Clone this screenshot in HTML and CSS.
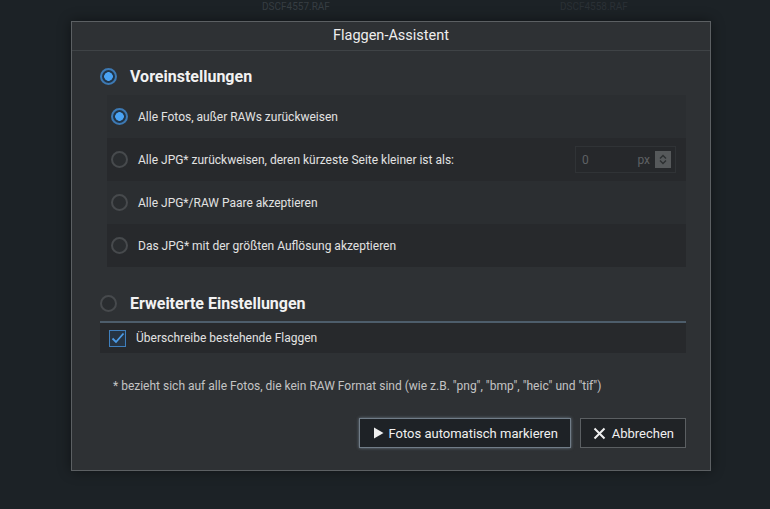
FILE: index.html
```html
<!DOCTYPE html>
<html lang="de">
<head>
    <meta charset="UTF-8">
    <meta name="viewport" content="width=device-width, initial-scale=1.0">
    <title>Flaggen-Assistent</title>
    <link rel="stylesheet" href="styles.css">
</head>
<body>

    <div class="backdrop">
        <span class="bg-label first">DSCF4557.RAF</span>
        <span class="bg-label second">DSCF4558.RAF</span>
    </div>

    <div class="dialog">
        <div class="dialog-title">Flaggen-Assistent</div>

        <div class="dialog-body">
            <div class="section-head">
                <span class="radio big checked"></span>
                <span class="section-label">Voreinstellungen</span>
            </div>

            <div class="options">
                <div class="option">
                    <span class="radio checked"></span>
                    <span class="option-text">Alle Fotos, außer RAWs zurückweisen</span>
                </div>
                <div class="option dark">
                    <span class="radio"></span>
                    <span class="option-text">Alle JPG* zurückweisen, deren kürzeste Seite kleiner ist als:</span>
                    <div class="px-input">
                        <span class="px-value">0</span>
                        <span class="px-unit">px</span>
                        <span class="spinner">
                            <svg width="8" height="11" viewBox="0 0 8 11"><path d="M1 4.5 L4 1.5 L7 4.5 M1 6.5 L4 9.5 L7 6.5" fill="none" stroke="#2c2f31" stroke-width="1.4"/></svg>
                        </span>
                    </div>
                </div>
                <div class="option">
                    <span class="radio"></span>
                    <span class="option-text">Alle JPG*/RAW Paare akzeptieren</span>
                </div>
                <div class="option dark">
                    <span class="radio"></span>
                    <span class="option-text">Das JPG* mit der größten Auflösung akzeptieren</span>
                </div>
            </div>

            <div class="section-head advanced">
                <span class="radio big"></span>
                <span class="section-label">Erweiterte Einstellungen</span>
            </div>

            <div class="check-row">
                <span class="checkbox">
                    <svg width="14" height="12" viewBox="0 0 14 12"><path d="M1.5 6.5 L5 10 L12.5 1.5" fill="none" stroke="#4b9be6" stroke-width="1.8"/></svg>
                </span>
                <span class="option-text">Überschreibe bestehende Flaggen</span>
            </div>

            <p class="note">* bezieht sich auf alle Fotos, die kein RAW Format sind (wie z.B. "png", "bmp", "heic" und "tif")</p>

            <div class="actions">
                <button class="btn primary">
                    <svg width="11" height="12" viewBox="0 0 11 12"><path d="M1 0.5 L10.5 6 L1 11.5 Z" fill="#f0f0f0"/></svg>
                    <span>Fotos automatisch markieren</span>
                </button>
                <button class="btn">
                    <svg width="13" height="13" viewBox="0 0 13 13"><path d="M1.5 1.5 L11.5 11.5 M11.5 1.5 L1.5 11.5" stroke="#f0f0f0" stroke-width="2"/></svg>
                    <span>Abbrechen</span>
                </button>
            </div>
        </div>
    </div>

</body>
</html>
```

FILE: styles.css
```css
body { margin: 0; padding: 0; background: #1c2226; font-family: Roboto, "Liberation Sans", Arial, sans-serif; height: 509px; overflow: hidden; }
.backdrop { height: 21px; display: flex; align-items: flex-start; }
.bg-label { font-size: 10px; color: #363d42; line-height: 12px; margin-top: 1px; }
.bg-label.first { margin-left: 262px; }
.bg-label.second { margin-left: 230px; color: #2a3035; }

.dialog { width: 638px; height: 448px; margin-left: 71px; background: #2e3134; border: 1px solid #5c6063; box-shadow: 0 0 12px rgba(0,0,0,0.45); }
.dialog-title { height: 28px; line-height: 27px; text-align: center; font-size: 14.5px; color: #eeeeee; border-bottom: 1px solid #3f4346; }
.dialog-body { padding: 14px 24px 0 28px; }

.section-head { display: flex; align-items: center; height: 22px; gap: 13px; }
.section-label { font-size: 16px; font-weight: bold; color: #f2f2f2; }
.section-head.advanced { margin-top: 25px; padding-bottom: 7px; border-bottom: 2px solid #4d5d6b; height: 22px; }

.radio { width: 13px; height: 13px; border-radius: 50%; border: 2px solid #474a4d; background: #2a2d30; flex-shrink: 0; box-sizing: content-box; }
.radio.checked { border-color: #3d79b3; background: radial-gradient(circle, #4aa3f4 0, #4aa3f4 4px, #223548 4.6px); }

.options { margin: 8px 0 0 7px; }
.option { display: flex; align-items: center; height: 43px; padding-left: 4px; background: #2b2e31; }
.option.dark { background: #27292c; }
.option .radio { margin-right: 10px; }
.option-text { font-size: 12px; color: #e2e2e2; }

.px-input { margin-left: auto; margin-right: 10px; width: 101px; height: 27px; border: 1px solid #303336; background: #26282b; display: flex; align-items: center; box-sizing: border-box; }
.px-value { font-size: 12px; color: #5e6164; margin-left: 6px; }
.px-unit { font-size: 12px; color: #5e6164; margin-left: auto; margin-right: 5px; }
.spinner { width: 16px; height: 17px; background: #56595b; display: flex; align-items: center; justify-content: center; margin-right: 4px; }

.check-row { display: flex; align-items: center; height: 30px; background: #27292c; padding-left: 9px; }
.checkbox { width: 15px; height: 15px; border: 1.5px solid #3f7fbd; background: #263443; display: flex; align-items: center; justify-content: center; margin-right: 10px; }

.note { margin: 25px 0 0 13px; font-size: 12px; line-height: 16px; color: #c4c4c4; }

.actions { display: flex; justify-content: flex-end; gap: 9px; margin-top: 24px; }
.btn { height: 30px; display: flex; align-items: center; gap: 6px; padding: 0 11px 0 12px; font-family: Roboto, "Liberation Sans", Arial, sans-serif; font-size: 13px; color: #f0f0f0; background: #202326; border: 1px solid #5b5f62; white-space: nowrap; }
.btn.primary { width: 212px; justify-content: center; gap: 5px; border-color: #717d88; box-shadow: 0 0 3px rgba(150,170,190,0.6); background: #1e2226; }
.btn svg { flex-shrink: 0; }
```
